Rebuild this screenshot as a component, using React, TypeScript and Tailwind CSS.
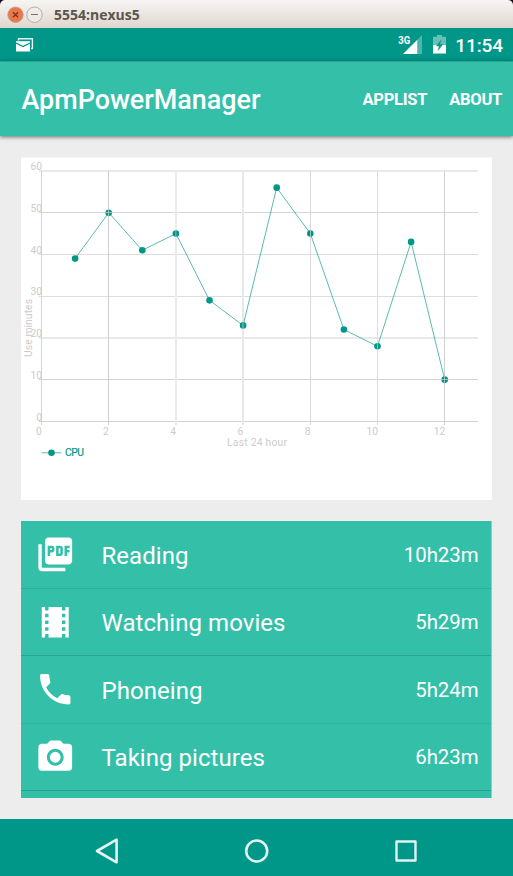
import React from "react";
import { MdPictureAsPdf, MdTheaters, MdPhone, MdPhotoCamera } from "react-icons/md";

const values = [39, 50, 41, 45, 29, 23, 56, 45, 22, 18, 43, 10];
const px = (n: number) => 41.5 + n * 33.6;
const py = (v: number) => 421.4 - v * 4.174;

const hLines = [
  { v: 60, y: 170, h: 2, o: "#e9e9e9" },
  { v: 50, y: 212, h: 1, o: "#d6d6d6" },
  { v: 40, y: 254, h: 1, o: "#dedede" },
  { v: 30, y: 296, h: 1, o: "#dedede" },
  { v: 20, y: 337, h: 2, o: "#e9e9e9" },
  { v: 10, y: 379, h: 1, o: "#d3d3d3" },
  { v: 0, y: 421, h: 1, o: "#d3d3d3" },
];
const vLines = [
  { v: 0, x: 41, w: 1, o: "#d3d3d3" },
  { v: 2, x: 108, w: 1, o: "#cecece" },
  { v: 4, x: 175, w: 2, o: "#ebebeb" },
  { v: 6, x: 242, w: 2, o: "#e8e8e8" },
  { v: 8, x: 310, w: 1, o: "#d8d8d8" },
  { v: 10, x: 377, w: 1, o: "#dcdcdc" },
  { v: 12, x: 444, w: 1, o: "#d0d0d0" },
];

function Chart() {
  const points = values.map((v, i) => `${px(i + 1)},${py(v)}`).join(" ");
  return (
    <svg className="block h-full w-full" viewBox="21 157 471 343" fontFamily="Roboto, sans-serif" fontSize="10.3">
      {hLines.map((l) => (
        <rect key={l.v} x="39" y={l.y} width="439" height={l.h} fill={l.o} />
      ))}
      {vLines.map((l) => (
        <rect key={l.v} x={l.x} y="171" width={l.w} height="254" fill={l.o} />
      ))}
      <polyline points={points} fill="none" stroke="#009688" strokeOpacity="0.65" strokeWidth="1" />
      {values.map((v, i) => (
        <circle key={i} cx={px(i + 1)} cy={py(v)} r="3.3" fill="#009688" />
      ))}
      <g fill="#cccccc" fillOpacity="0.7">
        <rect x="108" y="209" width="1" height="7" />
        <rect x="105" y="212" width="7" height="1" />
        <rect x="175" y="230" width="1.5" height="7" fillOpacity="0.4" />
        <rect x="242" y="322" width="2" height="7" fillOpacity="0.4" />
        <rect x="310" y="230" width="1" height="7" />
        <rect x="377" y="343" width="1" height="7" />
        <rect x="444" y="376" width="1" height="7" />
        <rect x="441" y="379" width="7" height="1" />
      </g>
      <g fill="#cccccc">
        {hLines.map((l) => (
          <text key={l.v} x="42" y={py(l.v) - 0.9} textAnchor="end">{l.v}</text>
        ))}
        {vLines.map((l) => (
          <text key={l.v} x={px(l.v) - (l.v >= 10 ? 5.2 : 2.7)} y="435" textAnchor="middle">{l.v}</text>
        ))}
        <text x="257" y="446" textAnchor="middle" textLength="60">Last 24 hour</text>
        <text transform="translate(32.2 328) rotate(-90)" textAnchor="middle" textLength="58">Use minutes</text>
      </g>
      <path d="M41.5 452.8h20" stroke="#009688" strokeOpacity="0.65" />
      <circle cx="51.5" cy="452.8" r="3.3" fill="#009688" />
      <text x="65" y="456.4" fill="#009688" stroke="#009688" strokeWidth="0.2" textLength="19">CPU</text>
    </svg>
  );
}

const rows = [
  { Icon: MdPictureAsPdf, name: "Reading", time: "10h23m", line: "border-[#2eb09c]" },
  { Icon: MdTheaters, name: "Watching movies", time: "5h29m", line: "border-[#2ba593]" },
  { Icon: MdPhone, name: "Phoneing", time: "5h24m", line: "border-[#2fb39e]" },
  { Icon: MdPhotoCamera, name: "Taking pictures", time: "6h23m", line: "border-[#2a9f8d]" },
];

export default function App() {
  return (
    <div className="flex h-[876px] w-[513px] flex-col overflow-hidden bg-[#ededed] font-[Roboto,sans-serif] text-white">
      <div className="h-7 shrink-0 bg-[#150812]">
        <div className="flex h-7 items-center rounded-t-[5px] bg-gradient-to-b from-[#f7f5f3] to-[#dfd7cf] pl-[7px] pt-px">
          <svg className="h-[18px] w-[38px]" viewBox="0 0 38 18">
            <circle cx="8.5" cy="8.7" r="7.7" fill="#ef7448" stroke="#b9a79b" />
            <path d="M6 6.2l5 5M11 6.2l-5 5" stroke="#6b3a25" strokeWidth="1.3" />
            <circle cx="27.5" cy="8.7" r="7.7" fill="#efebe7" stroke="#b5aea6" />
            <path d="M24 8.5h7" stroke="#77706a" />
          </svg>
          <span className="ml-[9px] font-['Open_Sans',sans-serif] text-[14px] font-bold text-[#5c554d]">5554:nexus5</span>
        </div>
      </div>

      <div className="flex h-[33px] shrink-0 items-center bg-[#009688] pl-4 pr-[10px]">
        <svg className="h-[14px] w-[18px]" viewBox="0 0 18 14">
          <path d="M2.5 2.5V.8H16.4V10.5H15" fill="none" stroke="#e4f4f2" strokeWidth="1.4" />
          <path d="M0 3.2h14v10.3H0z" fill="#fff" />
          <path d="M0 5l7 3.6L14 5" fill="none" stroke="#009688" strokeWidth="1.2" />
        </svg>
        <div className="ml-auto flex items-center">
          <svg className="h-5 w-6" viewBox="0 0 24 20" fontFamily="Roboto, sans-serif">
            <path d="M19.3 4.7L24 0v19H19.3z" fill="#4db6ac" />
            <path d="M19.3 4.7V19H5z" fill="#fff" />
            <text x="0.2" y="9" fontSize="11" fontWeight="700" fill="#fff" textLength="12" lengthAdjust="spacingAndGlyphs">3G</text>
          </svg>
          <svg className="ml-[11px] h-[19px] w-[13px]" viewBox="0 0 13 19">
            <path d="M0 1.8h4V0h5v1.8h4V10H0z" fill="#66c0b8" />
            <path d="M0 10h13v8.5H0z" fill="#fff" />
            <path d="M8.5 4.2L3 11.2h3l-1.5 5.2 5.6-7.2H7z" fill="#009688" />
          </svg>
          <span className="ml-[9px] mt-px text-[19px] font-medium leading-none tracking-[-0.1px]">11:54</span>
        </div>
      </div>

      <header className="relative flex h-[75px] shrink-0 items-center border-t border-[#20a896] bg-[#34bfa9] pl-[21.5px] pr-[11px] shadow-[0_1px_4px_rgba(0,0,0,0.55)]">
        <h1 className="mt-[3px] text-[26.9px] font-medium leading-none">ApmPowerManager</h1>
        <nav className="ml-auto mt-[2px] flex gap-[22px] text-[16.5px] font-bold leading-none tracking-[-0.25px]">
          <span>APPLIST</span>
          <span>ABOUT</span>
        </nav>
      </header>

      <main className="flex flex-1 flex-col px-[21px] pt-[21px]">
        <section className="h-[343px] w-[471px] border-t border-[#f6f6f6] bg-white">
          <div className="-mt-px h-[343px]">
            <Chart />
          </div>
        </section>
        <section className="mt-[21px] h-[277px] w-[471px] overflow-hidden border-r border-[#7dd5c7] bg-[#34bfa9]">
          {rows.map(({ Icon, name, time, line }) => (
            <div key={name} className={`flex h-[67.5px] items-center border-b pl-[13.5px] pr-[12.5px] ${line}`}>
              <Icon className="size-[40.5px]" />
              <span className="ml-[26.5px] mt-[3px] text-[24px] leading-none tracking-[0.05px]">{name}</span>
              <span className="ml-auto mt-px text-[20.4px] leading-none tracking-[-0.05px]">{time}</span>
            </div>
          ))}
        </section>
      </main>

      <footer className="flex h-[57px] shrink-0 items-center bg-[#009688] pl-[94px] pt-[7px]">
        <svg className="h-[30px] w-[330px]" viewBox="94 836 330 30" fill="none" stroke="#e2f3f1" strokeWidth="2.6" strokeLinejoin="round">
          <path d="M97 851l19.6-11.3v22.6z" />
          <circle cx="256.7" cy="851" r="10.5" />
          <rect x="396.5" y="841.5" width="19" height="19" strokeWidth="2.4" />
        </svg>
      </footer>
    </div>
  );
}
